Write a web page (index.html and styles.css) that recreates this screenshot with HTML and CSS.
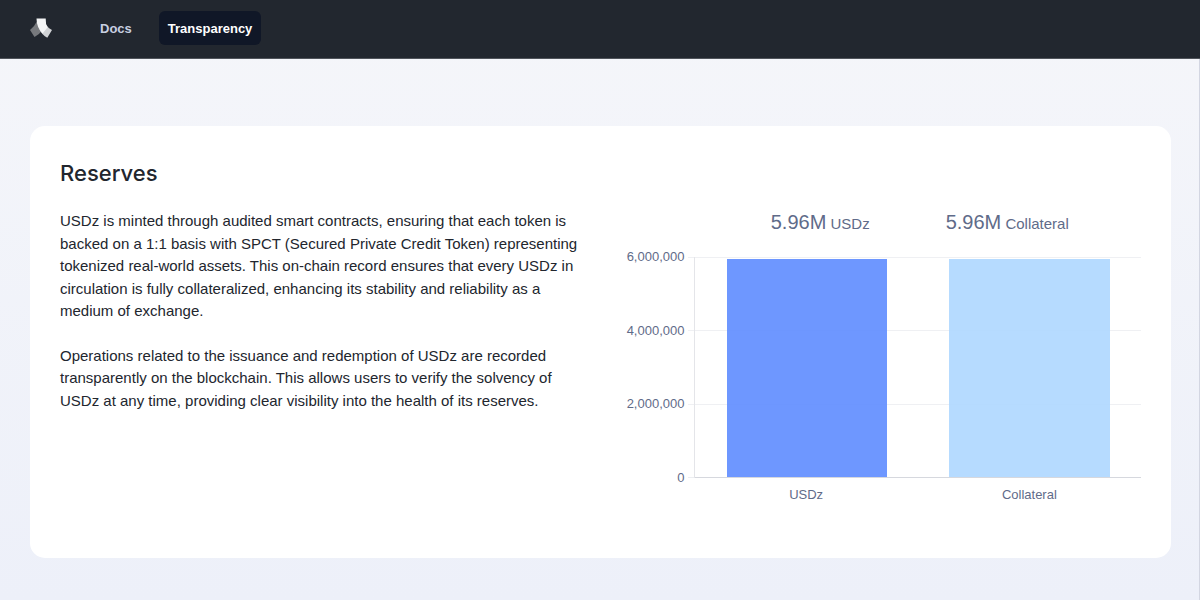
FILE: index.html
```html
<!DOCTYPE html>
<html lang="en">
<head>
<meta charset="utf-8">
<meta name="viewport" content="width=device-width, initial-scale=1">
<title>Transparency</title>
<link rel="stylesheet" href="styles.css">
</head>
<body class="page">
<header class="topbar">
  <a class="logo" href="#" aria-label="Home">
    <svg width="22" height="20" viewBox="0 0 22 20" aria-hidden="true">
      <path d="M6.500 4Q4.500 8.500 0 12L4.500 19Q9 17 12 12.500Z" fill="#77797d"/>
      <path d="M16 6.500Q18 10 22 12L17.300 19.700Q12 17 9.500 11.500Z" fill="#d0d2d5"/>
      <path d="M6.500 .5H15.700Q15.500 6 17.500 9.500L12.500 15.500Q6.500 9 6.500 .5Z" fill="#f3f4f5"/>
    </svg>
  </a>
  <nav class="nav">
    <a class="nav-link" href="#">Docs</a>
    <a class="nav-link nav-link-active" href="#" aria-current="page">Transparency</a>
  </nav>
</header>
<main class="content">
  <section class="card">
    <div class="about">
      <h1 class="title">Reserves</h1>
      <p class="text">USDz is minted through audited smart contracts, ensuring that each token is backed on a 1:1 basis with SPCT (Secured Private Credit Token) representing tokenized real-world assets. This on-chain record ensures that every USDz in circulation is fully collateralized, enhancing its stability and reliability as a medium of exchange.</p>
      <p class="text">Operations related to the issuance and redemption of USDz are recorded transparently on the blockchain. This allows users to verify the solvency of USDz at any time, providing clear visibility into the health of its reserves.</p>
    </div>
    <div class="chart">
      <div class="totals">
        <div class="total"><span class="amount">5.96M</span> USDz</div>
        <div class="total"><span class="amount">5.96M</span> Collateral</div>
      </div>
      <div class="scale">
        <span>6,000,000</span><span>4,000,000</span><span>2,000,000</span><span>0</span>
      </div>
      <div class="ticks"><i class="cell"></i><i class="cell"></i><i class="cell"></i></div>
      <div class="plot">
        <div class="lines"><i class="cell"></i><i class="cell"></i><i class="cell"></i></div>
        <div class="bars">
          <div class="bar bar-usdz" style="height: 99.3%"></div>
          <div class="bar bar-collateral" style="height: 99.3%"></div>
        </div>
      </div>
      <div class="names"><span>USDz</span><span>Collateral</span></div>
    </div>
  </section>
</main>
</body>
</html>
```
FILE: styles.css
```css
* {
  box-sizing: border-box;
}

.page {
  margin: 0;
  min-height: 100vh;
  display: flex;
  flex-direction: column;
  color: #22262e;
  font-family: "Liberation Sans", Arial, sans-serif;
  background: linear-gradient(#f5f6fa, #edf0f9);
}

.topbar {
  display: flex;
  align-items: center;
  gap: 39px;
  padding: 11px 30px 13px;
  background: #22272f;
  border-bottom: 1px solid #50545b;
}

.logo {
  display: flex;
}

.nav {
  display: flex;
  gap: 18px;
}

.nav-link {
  padding: 2px 9px 0;
  border-radius: 6px;
  color: #c8cfe0;
  font-size: 13px;
  font-weight: 700;
  line-height: 32px;
  text-decoration: none;
}

.nav-link-active {
  color: #fff;
  background: #101727;
}

.content {
  flex: 1;
  padding: 67px 28px 42px 30px;
  border-right: 1px solid #d3d6e2;
}

.card {
  display: grid;
  grid-template-columns: 51fr 50fr;
  gap: 42px;
  padding: 30px 30px 55px;
  border-radius: 15px;
  background: #fff;
}

.title {
  margin: 0 0 20px;
  font-family: Inter, "Liberation Sans", sans-serif;
  font-size: 22px;
  font-weight: 500;
  line-height: 34px;
}

.text {
  margin: 0 0 22px;
  font-size: 15px;
  line-height: 1.5;
}

.chart {
  display: grid;
  grid-template-columns: auto 6px 1fr;
  grid-template-rows: auto 221px auto;
  padding-top: 52px;
  color: #5f6b89;
  font-size: 13px;
}

.totals {
  grid-column: 3;
  display: flex;
  justify-content: center;
  gap: 76px;
  margin-bottom: 19px;
  padding-left: 4px;
  font-size: 15px;
  line-height: 28px;
}

.amount {
  font-size: 20px;
}

.scale {
  grid-column: 1;
  display: flex;
  flex-direction: column;
  justify-content: space-between;
  margin: -8px 4px -8px 0;
  text-align: right;
  line-height: 16px;
}

.ticks,
.lines {
  display: grid;
  grid-template-rows: repeat(3, 1fr);
  border-bottom: 1px solid #d6d8de;
}

.ticks {
  border-color: #eceef1;
}

.cell {
  border-top: 1px solid #eff0f3;
}

.plot {
  display: grid;
  border-left: 1px solid #e4e5e9;
}

.lines,
.bars {
  grid-area: 1 / 1;
}

.bars {
  display: grid;
  grid-template-columns: 1fr 1fr;
  align-items: end;
  justify-items: center;
  padding-bottom: 1px;
}

.bar {
  width: 72%;
}

.bar-usdz {
  background: rgba(94, 140, 255, 0.9);
}

.bar-collateral {
  background: rgba(174, 215, 255, 0.9);
}

.names {
  grid-column: 3;
  display: grid;
  grid-template-columns: 1fr 1fr;
  padding-top: 9px;
  text-align: center;
  line-height: 16px;
}
```
